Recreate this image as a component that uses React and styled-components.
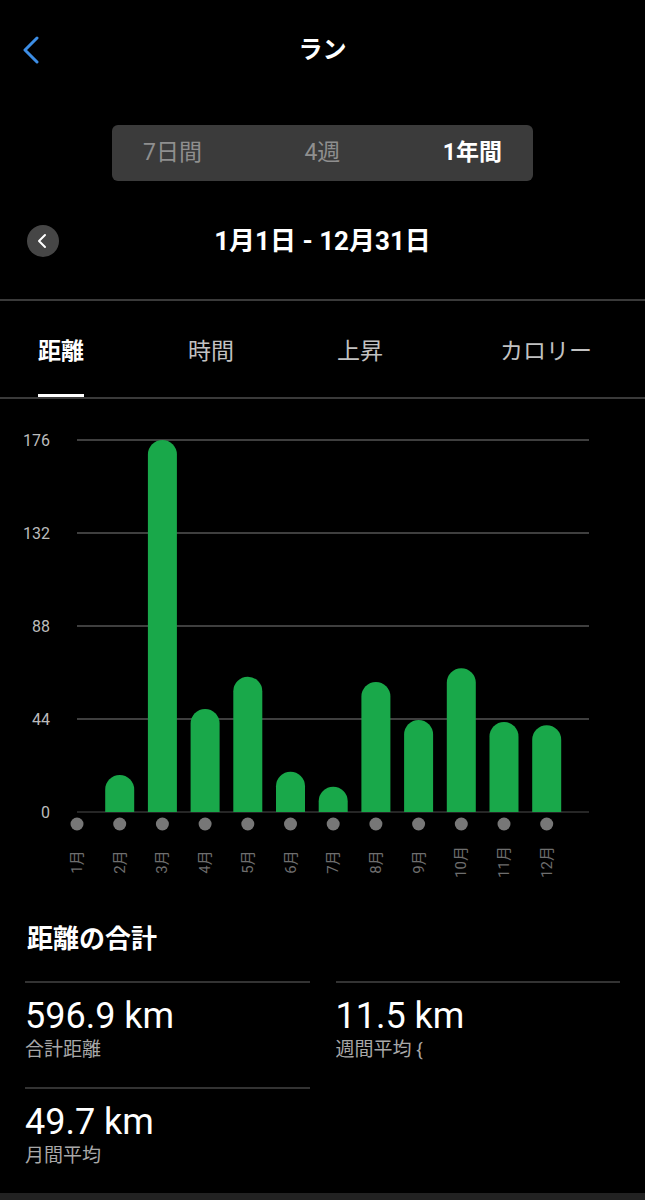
import React, { useState } from "react";
import styled, { createGlobalStyle } from "styled-components";

const GlobalStyle = createGlobalStyle`
  html, body {
    margin: 0;
    padding: 0;
    background: #000;
  }
  body {
    font-family: Roboto, "Noto Sans CJK JP", sans-serif;
    color: #fff;
  }
`;

const months = [0, 17.5, 176, 48.7, 64, 19, 12, 61.5, 43.5, 68, 42.6, 41];
const ticks = [176, 132, 88, 44, 0];

const stats = [
  { value: "596.9 km", label: "合計距離" },
  { value: "11.5 km", label: "週間平均 {" },
  { value: "49.7 km", label: "月間平均" },
];

export default function App() {
  const [range, setRange] = useState(2);
  const [tab, setTab] = useState(0);

  return (
    <Page>
      <GlobalStyle />
      <Header>
        <BackButton aria-label="戻る">
          <svg width="18" height="28" viewBox="0 0 18 28">
            <path
              d="M15 2 L3 14 L15 26"
              fill="none"
              stroke="#3d8ee6"
              strokeWidth="3"
              strokeLinecap="round"
              strokeLinejoin="round"
            />
          </svg>
        </BackButton>
        <Title>ラン</Title>
      </Header>

      <Segmented>
        {["7日間", "4週", "1年間"].map((t, i) => (
          <Segment key={t} $active={range === i} onClick={() => setRange(i)}>
            {t}
          </Segment>
        ))}
      </Segmented>

      <DateRow>
        <RoundButton aria-label="前へ">
          <svg width="10" height="16" viewBox="0 0 10 16">
            <path
              d="M8 2 L2 8 L8 14"
              fill="none"
              stroke="#fff"
              strokeWidth="2"
              strokeLinecap="round"
              strokeLinejoin="round"
            />
          </svg>
        </RoundButton>
        <DateTitle>1月1日 - 12月31日</DateTitle>
      </DateRow>

      <Divider $gap={42} />

      <Tabs>
        {["距離", "時間", "上昇", "カロリー"].map((t, i) => (
          <Tab key={t} $active={tab === i} onClick={() => setTab(i)}>
            {t}
          </Tab>
        ))}
      </Tabs>

      <Divider />

      <Chart viewBox="0 0 645 495" width="645" height="495">
        {ticks.map((v, i) => {
          const y = 41 + i * 93;
          return (
            <g key={v}>
              <line
                x1="77"
                x2="589"
                y1={y}
                y2={y}
                stroke={v === 0 ? "#333" : "#555"}
                strokeWidth="1.5"
              />
              <text
                x="50"
                y={y + 6}
                textAnchor="end"
                fontSize="16"
                fill="#bcbcbc"
                fontFamily="Roboto, sans-serif"
              >
                {v}
              </text>
            </g>
          );
        })}
        {months.map((v, i) => {
          const cx = 77 + i * 42.7;
          const base = 413;
          const top = base - v * 2.114;
          const r = 14.5;
          return (
            <g key={i}>
              {v > 0 && (
                <path
                  d={`M${cx - r} ${base} V${top + r} A${r} ${r} 0 0 1 ${cx + r} ${top + r} V${base} Z`}
                  fill="#19a84a"
                />
              )}
              <circle cx={cx} cy="425" r="6.5" fill="#777" />
              <text
                x={cx}
                y="463"
                transform={`rotate(-90 ${cx} 463)`}
                textAnchor="middle"
                dominantBaseline="central"
                fontSize="15"
                fill="#6e6e6e"
                fontFamily="Roboto, 'Noto Sans CJK JP', sans-serif"
              >
                {i + 1}月
              </text>
            </g>
          );
        })}
      </Chart>

      <Summary>
        <SummaryTitle>距離の合計</SummaryTitle>
        <StatGrid>
          {stats.map((s) => (
            <Stat key={s.label}>
              <StatValue>{s.value}</StatValue>
              <StatLabel>{s.label}</StatLabel>
            </Stat>
          ))}
        </StatGrid>
      </Summary>

      <BottomBar />
    </Page>
  );
}

const Page = styled.div`
  display: flex;
  flex-direction: column;
  width: 645px;
  min-height: 1200px;
  background: #000;
`;

const Header = styled.header`
  display: grid;
  grid-template-columns: 1fr auto 1fr;
  align-items: center;
  height: 100px;
  padding: 0 18px;
  box-sizing: border-box;
`;

const BackButton = styled.button`
  justify-self: start;
  display: flex;
  align-items: center;
  background: none;
  border: 0;
  padding: 0 0 0 4px;
  cursor: pointer;
`;

const Title = styled.h1`
  margin: 0;
  font-size: 24px;
  font-weight: 700;
  line-height: 30px;
`;

const Segmented = styled.div`
  display: flex;
  justify-content: space-between;
  align-items: center;
  align-self: center;
  width: 421px;
  height: 56px;
  margin-top: 25px;
  padding: 0 31px;
  box-sizing: border-box;
  background: #3b3b3b;
  border-radius: 6px;
`;

const Segment = styled.button`
  background: none;
  border: 0;
  padding: 0;
  font-family: inherit;
  font-size: 23px;
  line-height: 30px;
  font-weight: ${(p) => (p.$active ? 700 : 400)};
  color: ${(p) => (p.$active ? "#fff" : "#8f8f8f")};
  cursor: pointer;
`;

const DateRow = styled.div`
  display: grid;
  grid-template-columns: 1fr auto 1fr;
  align-items: center;
  height: 32px;
  margin-top: 44px;
  padding: 0 27px;
`;

const RoundButton = styled.button`
  justify-self: start;
  display: flex;
  align-items: center;
  justify-content: center;
  width: 32px;
  height: 32px;
  padding: 0 2px 0 0;
  border: 0;
  border-radius: 50%;
  background: #464646;
  cursor: pointer;
`;

const DateTitle = styled.div`
  font-size: 26px;
  font-weight: 700;
  line-height: 32px;
`;

const Divider = styled.div`
  height: 2px;
  margin-top: ${(p) => p.$gap || 0}px;
  background: #3a3a3a;
  flex-shrink: 0;
`;

const Tabs = styled.nav`
  display: grid;
  grid-template-columns: 150px 149px 163px auto;
  height: 96px;
  padding-left: 38px;
  box-sizing: border-box;
`;

const Tab = styled.button`
  justify-self: start;
  display: flex;
  align-items: center;
  height: 96px;
  padding: 3px 0 0;
  background: none;
  border: 0;
  border-bottom: 3px solid ${(p) => (p.$active ? "#fff" : "transparent")};
  box-sizing: border-box;
  font-family: inherit;
  font-size: 23px;
  font-weight: ${(p) => (p.$active ? 700 : 400)};
  color: ${(p) => (p.$active ? "#fff" : "#c2c2c2")};
  cursor: pointer;
`;

const Chart = styled.svg`
  display: block;
  flex-shrink: 0;
`;

const Summary = styled.section`
  padding: 30px 25px 0;
`;

const SummaryTitle = styled.h2`
  margin: 0 0 0 2px;
  font-size: 26px;
  font-weight: 700;
  line-height: 30px;
`;

const StatGrid = styled.div`
  display: grid;
  grid-template-columns: 1fr 1fr;
  column-gap: 26px;
  margin-top: 27px;
`;

const Stat = styled.div`
  border-top: 2px solid #333;
  padding: 12px 0 24px;
`;

const StatValue = styled.div`
  font-size: 36px;
  line-height: 42px;
  font-weight: 400;
  color: #fff;
`;

const StatLabel = styled.div`
  font-size: 19px;
  line-height: 26px;
  color: #a8a8a8;
`;

const BottomBar = styled.div`
  margin-top: auto;
  height: 7px;
  background: #222;
`;
